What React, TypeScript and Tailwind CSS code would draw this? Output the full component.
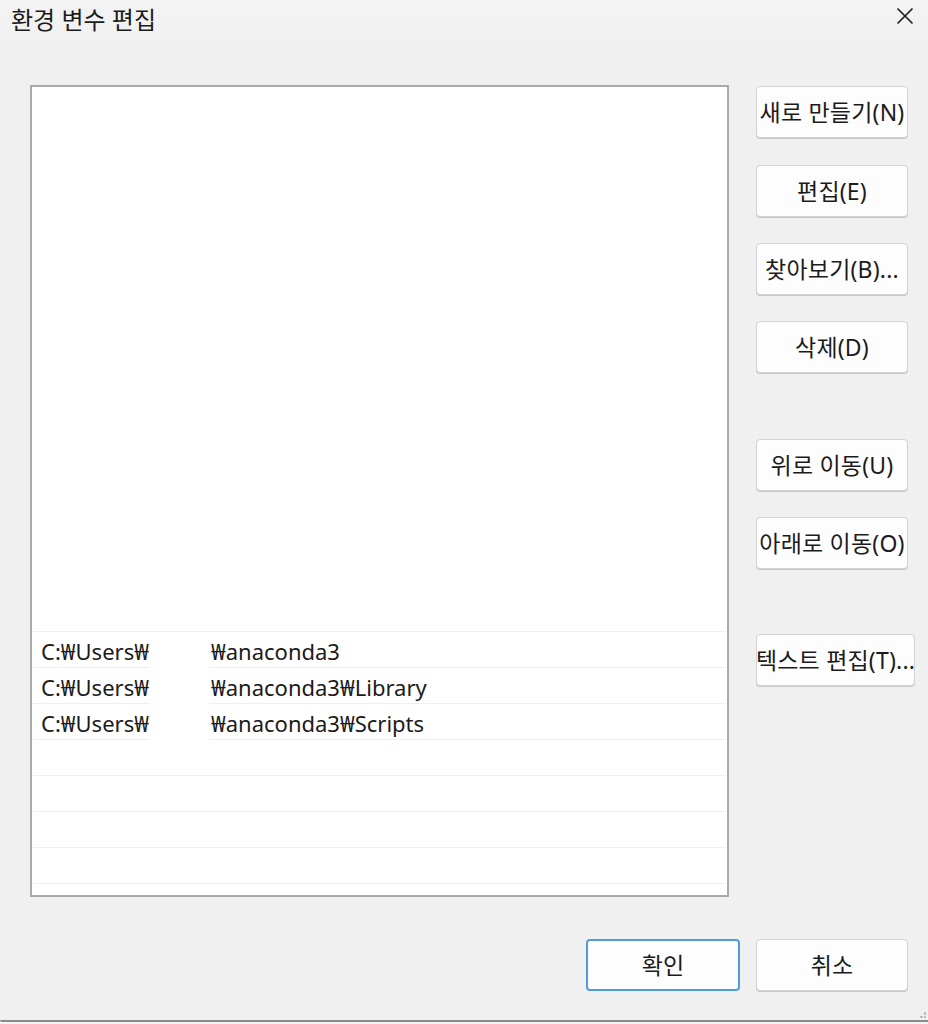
import React from "react";

const font = { fontFamily: '"Noto Sans", "Noto Sans CJK KR", sans-serif' };

function Btn({ label, w = "w-[152px]", mt = "", primary = false }: { label: string; w?: string; mt?: string; primary?: boolean }) {
  return (
    <div
      className={`${w} ${mt} h-[52px] shrink-0 flex items-center justify-center rounded-[4px] bg-[#fdfdfd] text-[23px] tracking-[0.2px] text-[#1b1b1b] whitespace-nowrap ${
        primary ? "border-2 border-[#4f9ae0]" : "border border-[#d3d3d3] shadow-[0_1px_0_#c8c8c8]"
      }`}
    >
      {label}
    </div>
  );
}

function Row({ a, b, gap }: { a?: string; b?: string; gap?: boolean }) {
  return (
    <div className="h-[36px] shrink-0 flex items-center relative border-t border-[#efefef] text-[22px] text-[#1b1b1b]">
      {gap && <div className="absolute left-[117px] top-[-1px] w-[59px] h-[1px] bg-white" />}
      <span className="absolute left-[8px] top-[3px] whitespace-nowrap">{a}</span>
      <span className="absolute left-[178px] top-[3px] whitespace-nowrap">{b}</span>
    </div>
  );
}

export default function App() {
  return (
    <div className="w-[928px] h-[1024px] bg-[#f0f0f0] flex flex-col relative overflow-hidden" style={font}>
      <div className="h-[44px] bg-gradient-to-b from-[#f3f3f3] to-[#f1f1f1] flex items-start justify-between">
        <div className="pl-[11px] pt-[2px] text-[24px] text-[#1b1b1b]">환경 변수 편집</div>
        <svg className="mt-[7px] mr-[14px]" width="18" height="18" viewBox="0 0 18 18">
          <path d="M1.5 1.5 L16.5 16.5 M16.5 1.5 L1.5 16.5" stroke="#1b1b1b" strokeWidth="1.6" />
        </svg>
      </div>
      <div className="flex pl-[30px] pt-[41px]">
        <div className="w-[699px] h-[812px] border-2 border-[#aaaaaa] bg-white flex flex-col px-[1px] overflow-hidden">
          <div className="h-[544px] shrink-0" />
          <Row a="C:₩Users₩" b="₩anaconda3" />
          <Row a="C:₩Users₩" b="₩anaconda3₩Library" gap />
          <Row a="C:₩Users₩" b="₩anaconda3₩Scripts" gap />
          <Row gap />
          <Row />
          <Row />
          <Row />
          <div className="border-t border-[#efefef]" />
        </div>
        <div className="flex flex-col ml-[27px] pt-[1px]">
          <Btn label="새로 만들기(N)" />
          <Btn label="편집(E)" mt="mt-[27px]" />
          <Btn label="찾아보기(B)..." mt="mt-[26px]" />
          <Btn label="삭제(D)" mt="mt-[26px]" />
          <Btn label="위로 이동(U)" mt="mt-[66px]" />
          <Btn label="아래로 이동(O)" mt="mt-[26px]" />
          <Btn label="텍스트 편집(T)..." w="w-[159px]" mt="mt-[65px]" />
        </div>
      </div>
      <div className="flex justify-end pr-[20px] mt-[42px] gap-[16px]">
        <Btn label="확인" w="w-[154px]" primary />
        <Btn label="취소" />
      </div>
      <div className="absolute left-0 right-0 bottom-[2px] h-[2px] bg-[#8a8a8a] rounded-bl-[8px]" />
      <div className="absolute left-0 right-0 bottom-0 h-[2px] bg-[#f4f4f4]" />
      <div className="absolute right-[2px] bottom-[6px] w-[6px] h-[6px] grid grid-cols-2 gap-[1px] opacity-60">
        <span />
        <span className="bg-[#9a9a9a]" />
        <span className="bg-[#9a9a9a]" />
        <span className="bg-[#9a9a9a]" />
      </div>
    </div>
  );
}
